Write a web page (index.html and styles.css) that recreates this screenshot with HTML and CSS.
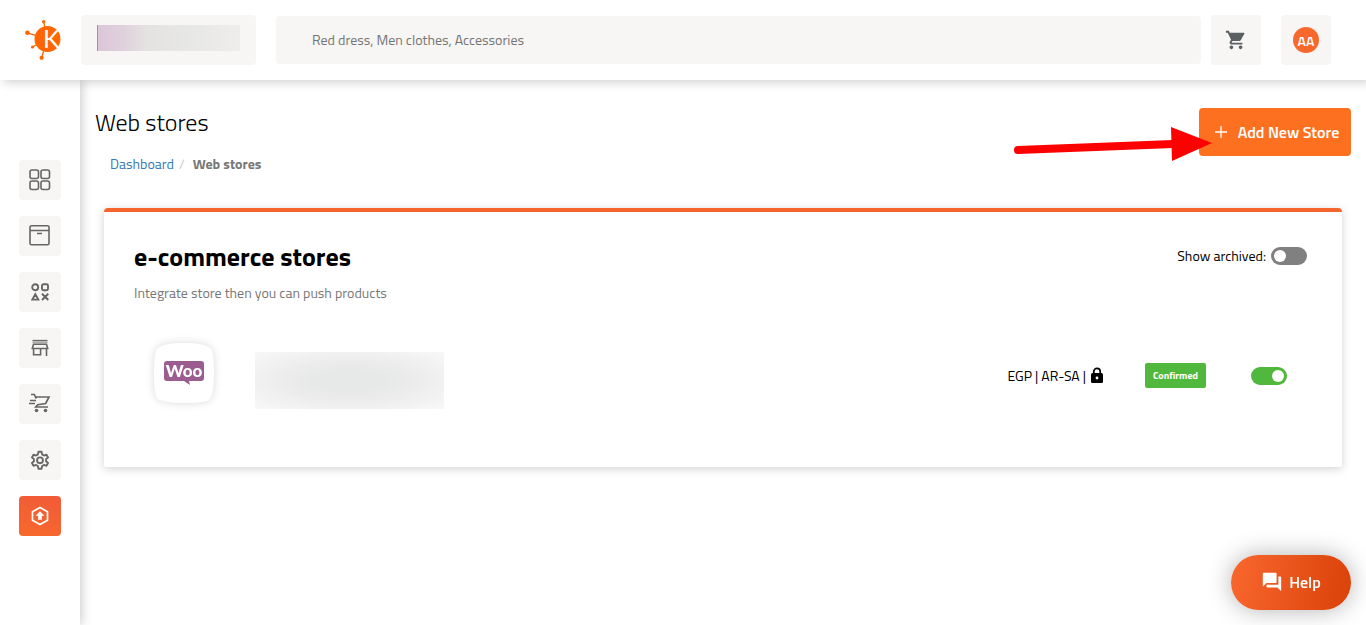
FILE: index.html
```html
<!DOCTYPE html>
<html lang="en">
<head>
  <meta charset="UTF-8">
  <meta name="viewport" content="width=device-width, initial-scale=1.0">
  <title>Web stores</title>
  <link rel="stylesheet" href="styles.css">
</head>
<body>
  <header class="topbar">
    <a class="logo" href="#" aria-label="Home">
      <svg width="36" height="40" viewBox="0 0 36 40">
        <g stroke="#ff6600" stroke-width="1.3">
          <path d="M22 19L18.700 1.500M22 19L2.500 12.800M22 19L7.500 27M22 19L16.600 38"/>
        </g>
        <g fill="#ff6600">
          <circle cx="22.500" cy="19" r="13"/>
          <circle cx="18.700" cy="1.800" r="1.700"/>
          <circle cx="2.400" cy="12.700" r="2.300"/>
          <circle cx="7.500" cy="27" r="1.600"/>
          <circle cx="16.600" cy="37.800" r="2.100"/>
        </g>
        <text class="logo-letter" x="18" y="28">K</text>
      </svg>
    </a>
    <button class="store-picker" type="button" aria-label="Current store"><span class="store-name"></span></button>
    <input class="search" type="search" aria-label="Search" placeholder="Red dress, Men clothes, Accessories">
    <button class="tile cart" type="button" aria-label="Cart">
      <svg width="22" height="22" viewBox="0 0 24 24" fill="#5a6062"><path d="M7 18c-1.100 0-2 .9-2 2s.9 2 2 2 2-.9 2-2-.9-2-2-2zM1 2v2h2l3.600 7.600-1.400 2.400C4.500 15.400 5.500 17 7 17h12v-2H7.400l-.2-.3.900-1.700h7.500c.7 0 1.400-.4 1.700-1L21 5.500C21.500 4.800 21 4 20.100 4H5.200L4.300 2H1zm16 16c-1.100 0-2 .9-2 2s.9 2 2 2 2-.9 2-2-.9-2-2-2z"/></svg>
    </button>
    <button class="tile" type="button" aria-label="Account"><span class="avatar">AA</span></button>
  </header>

  <div class="layout">
    <nav class="sidebar">
      <a href="#" aria-label="Dashboard">
        <svg width="22" height="22" viewBox="0 0 22 22" fill="none" stroke="#666" stroke-width="1.600"><rect x="1" y="1" width="8.500" height="8.500" rx="2"/><rect x="12" y="1" width="8.500" height="8.500" rx="2"/><rect x="1" y="12" width="8.500" height="8.500" rx="2"/><rect x="12" y="12" width="8.500" height="8.500" rx="2"/></svg>
      </a>
      <a href="#" aria-label="Products">
        <svg width="22" height="22" viewBox="0 0 22 22" fill="none" stroke="#666" stroke-width="1.600"><rect x="1" y=".8" width="19" height="19" rx="1.500"/><path d="M1 5.500h19M8 8.500h5"/></svg>
      </a>
      <a href="#" aria-label="Categories">
        <svg width="18" height="18" viewBox="0 0 18 18" fill="none" stroke="#666" stroke-width="1.900"><circle cx="4.200" cy="4.200" r="3"/><rect x="11" y="1.200" width="6" height="6" rx="1.500"/><path d="M4.300 11.200L7.300 16.600H1.300zM11 10.800l6.300 6.200M17.300 10.800L11 17"/></svg>
      </a>
      <a href="#" aria-label="Stores">
        <svg width="18" height="18" viewBox="0 0 18 18" fill="none" stroke="#666" stroke-width="1.600"><path d="M1.500 1.600h15" stroke-width="1.500"/><path d="M1.500 3.500h15" stroke="#aaa"/><path d="M2.500 5.300h13l1.200 4.200H1.300zM2.600 9.500v6.200h7V9.500M15.500 9.500V17"/></svg>
      </a>
      <a href="#" aria-label="Orders">
        <svg width="22" height="22" viewBox="0 0 22 22" fill="none" stroke="#666" stroke-width="1.700"><path d="M2 1.500h3.300L6.500 4H20l-3.300 6.500-8 1.200-2 2.300H19M6.500 4l.8 1.500M1 7.500h6M0 10.500h6"/><circle cx="7.500" cy="17.500" r="1.800" fill="#666" stroke="none"/><circle cx="16.500" cy="17.500" r="1.800" fill="#666" stroke="none"/></svg>
      </a>
      <a href="#" aria-label="Settings">
        <svg width="22" height="22" viewBox="0 0 24 24" fill="none" stroke="#666" stroke-width="2" stroke-linejoin="round"><path d="M10.300 3h3.400l.6 2.900 2 1.200 2.800-.9 1.700 3-2.200 1.900v2.300l2.200 1.900-1.700 3-2.800-.9-2 1.200-.6 2.900h-3.400l-.6-2.900-2-1.200-2.800.9-1.700-3 2.200-1.900v-2.300L3.200 9.200l1.700-3 2.800.9 2-1.200z"/><circle cx="12" cy="12.300" r="3.200"/></svg>
      </a>
      <a class="active" href="#" aria-label="Web stores">
        <svg width="20" height="20" viewBox="0 0 20 20"><path d="M10 1.500l7.500 4.200v8.600L10 18.500l-7.500-4.200V5.700z" fill="none" stroke="#fff" stroke-width="1.700"/><path d="M10 5.200L14.400 9.800H11.900V13.700H8.100V9.800H5.600z" fill="#fff"/></svg>
      </a>
    </nav>

    <main class="content">
      <div class="page-head">
        <div>
          <h1>Web stores</h1>
          <nav class="breadcrumb" aria-label="Breadcrumb">
            <a href="#">Dashboard</a><span class="separator">/</span><strong>Web stores</strong>
          </nav>
        </div>
        <div class="add-wrap">
          <button class="add-store" type="button">
            <svg width="12" height="12" viewBox="0 0 12 12" stroke="#fff" stroke-width="1.300"><path d="M6 0v12M0 6h12"/></svg>
            Add New Store
          </button>
          <svg class="pointer" width="200" height="36" viewBox="0 0 200 36" aria-hidden="true"><path d="M5 24L160 18" stroke="#f00" stroke-width="8" stroke-linecap="round"/><path d="M158 1L199 17L159 35z" fill="#f00"/></svg>
        </div>
      </div>

      <section class="card">
        <div class="card-head">
          <div>
            <h2>e-commerce stores</h2>
            <p>Integrate store then you can push products</p>
          </div>
          <label class="archived">Show archived: <input class="switch" type="checkbox"></label>
        </div>
        <div class="store-row">
          <svg class="store-logo" width="60" height="60" viewBox="0 0 60 60">
            <path d="M30 0C44 0 53 2 56 5S60 16 60 30 58 53 56 56 44 60 30 60 7 58 4 56 0 44 0 30 1 8 4 5 16 0 30 0z" fill="#fff"/>
            <path d="M13 18h34q3 0 3 3v14q0 3-3 3H35l1 4-6-4H13q-3 0-3-3V21q0-3 3-3z" fill="#9b5c8f"/>
            <text class="woo" x="30" y="34" text-anchor="middle">Woo</text>
          </svg>
          <div class="store-info"></div>
          <div class="store-meta">
            <div class="locale">EGP | AR-SA |
              <svg width="14" height="17" viewBox="0 0 14 17"><path d="M3.800 7V4.500a3.200 3.200 0 0 1 6.400 0V7" fill="none" stroke="#000" stroke-width="1.700"/><rect x="1" y="6" width="12" height="10" rx="1.500"/><circle cx="7" cy="11" r="1.400" fill="#fff"/></svg>
            </div>
            <span class="badge">Confirmed</span>
            <input class="switch" type="checkbox" aria-label="Store enabled" checked>
          </div>
        </div>
      </section>
    </main>
  </div>

  <button class="help" type="button">
    <svg width="22" height="22" viewBox="0 0 24 24" fill="#fff"><path d="M21 6h-2v9H6v2c0 .6.400 1 1 1h11l4 4V7c0-.6-.4-1-1-1zm-4 6V3c0-.6-.4-1-1-1H3c-.6 0-1 .4-1 1v14l4-4h10c.6 0 1-.4 1-1z"/></svg>
    Help
  </button>
</body>
</html>
```
FILE: styles.css
```css
* {
  box-sizing: border-box;
}
body {
  margin: 0;
  min-height: 100vh;
  display: flex;
  flex-direction: column;
  background: #fff;
  color: #000;
  font-family: "Titillium Web", Roboto, sans-serif;
  font-size: 14px;
  line-height: 20px;
}
button,
input {
  font: inherit;
  border: 0;
}
button {
  cursor: pointer;
}
h1,
h2,
p {
  margin: 0;
}
a {
  text-decoration: none;
}
svg {
  flex-shrink: 0;
}

/* top bar */
.topbar {
  position: relative;
  z-index: 2;
  display: flex;
  align-items: center;
  height: 80px;
  padding: 0 35px 0 25px;
  background: #fff;
  box-shadow: 4px 2px 10px rgba(0, 0, 0, 0.2);
}
.logo {
  display: flex;
  margin-right: 20px;
}
.logo-letter {
  fill: #fff;
  font-family: Lato, sans-serif;
  font-size: 25px;
}
.store-picker {
  width: 175px;
  height: 50px;
  padding: 0 16px;
  margin-right: 20px;
  border-radius: 4px;
  background: #f7f6f4;
}
.store-name {
  display: block;
  height: 26px;
  margin-top: -4px;
  border-left: 1px solid #a78bab;
  background: linear-gradient(90deg, #dcc5d8, #dfd1dc 18%, #e4e3e2 35%, #e8e8e7 70%, #eeedec);
}
.search {
  flex: 1;
  min-width: 0;
  height: 48px;
  padding: 0 36px 2px;
  margin-right: 10px;
  border-radius: 4px;
  background: #f7f6f4;
}
.search::placeholder {
  color: #757575;
}
.tile {
  display: flex;
  align-items: center;
  justify-content: center;
  width: 50px;
  height: 50px;
  padding: 0;
  border-radius: 4px;
  background: #f7f6f4;
}
.cart {
  margin-right: 20px;
}
.avatar {
  width: 26px;
  height: 26px;
  border-radius: 50%;
  background: #f8682c;
  color: #fff;
  font-weight: 600;
  line-height: 28px;
}

/* side bar */
.layout {
  flex: 1;
  display: flex;
}
.sidebar {
  display: flex;
  flex-direction: column;
  align-items: center;
  gap: 16px;
  width: 80px;
  padding-top: 80px;
  background: #fff;
  box-shadow: 2px 0 10px rgba(0, 0, 0, 0.2);
}
.sidebar a {
  display: flex;
  align-items: center;
  justify-content: center;
  width: 42px;
  height: 40px;
  border-radius: 4px;
  background: #f7f6f4;
}
.sidebar .active {
  background: linear-gradient(15deg, #f7692c, #f15a38);
}

/* page */
.content {
  flex: 1;
  padding: 28px 15px;
}
.page-head {
  display: flex;
  justify-content: space-between;
  height: 100px;
}
h1 {
  font-size: 24px;
  font-weight: 300;
  line-height: 28px;
}
.breadcrumb {
  padding: 18px 15px;
  color: #777;
}
.breadcrumb a {
  color: #337ab7;
}
.separator {
  padding: 0 8px 0 5px;
  color: #ccc;
}
.add-wrap {
  position: relative;
}
.add-store {
  display: flex;
  align-items: center;
  justify-content: center;
  gap: 11px;
  width: 152px;
  height: 48px;
  padding: 0 0 0 4px;
  border-radius: 4px;
  background: #fc7020;
  color: #fff;
  font-size: 16px;
  font-weight: 600;
  white-space: nowrap;
}
/* arrow laid over the button's left edge */
.pointer {
  position: absolute;
  top: 18px;
  right: 138px;
}

/* card */
.card {
  min-height: 259px;
  margin: 0 9px;
  padding: 30px;
  border-top: 4px solid #f7652e;
  border-radius: 4px 4px 2px 2px;
  background: #fff;
  box-shadow: 0 2px 10px rgba(0, 0, 0, 0.18);
}
.card-head {
  display: flex;
  justify-content: space-between;
}
h2 {
  font-size: 26px;
  font-weight: 700;
  line-height: 30px;
}
.card p {
  margin-top: 11px;
  color: #777;
}
.archived {
  display: flex;
  align-items: center;
  gap: 5px;
  height: 27px;
  margin-right: 5px;
}
.store-row {
  display: flex;
  align-items: center;
  margin-top: 33px;
  padding: 0 25px 0 20px;
}
.store-logo {
  filter: drop-shadow(0 0 4px rgba(0, 0, 0, 0.15));
}
.woo {
  fill: #fff;
  font-family: Lato, sans-serif;
  font-size: 17px;
  font-weight: 900;
}
.store-info {
  width: 189px;
  height: 57px;
  margin: 16px auto 0 41px;
  background: radial-gradient(ellipse, #e7e8e8 25%, #ececec 50%, #f8f8f8 100%);
}
.store-meta {
  display: flex;
  align-items: center;
  padding-top: 6px;
}
.locale {
  display: flex;
  align-items: center;
  gap: 4px;
  margin-right: 41px;
}
.badge {
  width: 61px;
  margin-right: 45px;
  border-radius: 2px;
  background: #50b83c;
  color: #fff;
  font-size: 10px;
  font-weight: 700;
  line-height: 25px;
  text-align: center;
}

/* switches */
.switch {
  appearance: none;
  display: flex;
  align-items: center;
  width: 36px;
  height: 18px;
  margin: 0;
  padding: 0 3px;
  border-radius: 9px;
  background: #808080;
}
.switch::before {
  content: "";
  width: 12px;
  height: 12px;
  border-radius: 50%;
  background: #fff;
}
.switch:checked {
  justify-content: flex-end;
  background: #50b83c;
}

.help {
  position: fixed;
  right: 15px;
  bottom: 15px;
  z-index: 3;
  display: flex;
  align-items: center;
  justify-content: center;
  gap: 6px;
  width: 120px;
  height: 55px;
  padding: 0 0 2px;
  border-radius: 28px;
  background: linear-gradient(100deg, #f9672f, #d94208);
  box-shadow: 0 0 24px rgba(0, 0, 0, 0.3);
  color: #fff;
  font-size: 16px;
  font-weight: 600;
}
```
